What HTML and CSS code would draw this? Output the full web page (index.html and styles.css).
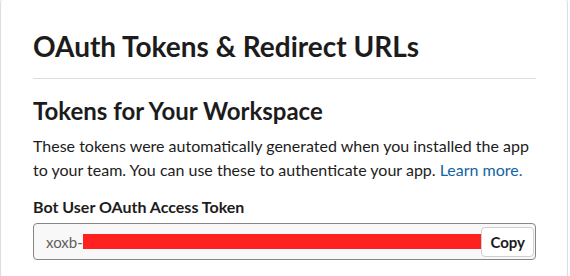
FILE: index.html
```html
<!DOCTYPE html>
<html lang="en">
<head>
    <meta charset="UTF-8">
    <title>OAuth Tokens</title>
    <link rel="stylesheet" href="styles.css">
</head>
<body>
    <div class="card">
        <h1 class="title">OAuth Tokens &amp; Redirect URLs</h1>
        <div class="section">
            <h2 class="subtitle">Tokens for Your Workspace</h2>
            <p class="desc">These tokens were automatically generated when you installed the app to your team. You can use these to authenticate your app. <a href="#">Learn more.</a></p>
            <label class="field-label">Bot User OAuth Access Token</label>
            <div class="token-box">
                <span class="token-text">xoxb-</span>
                <span class="redacted"></span>
                <button class="copy-btn">Copy</button>
            </div>
        </div>
    </div>
</body>
</html>
```

FILE: styles.css
```css
/* Layout utama */
body {
    margin: 0;
    background: white;
    font-family: Lato, "Noto Sans", sans-serif;
    color: #1d1c1d;
}
.card {
    width: 568px;
    margin-top: -3px;
    border: 1px solid #dddddd;
    border-radius: 6px;
    padding: 0 31px 20px 32px;
    box-sizing: border-box;
}
.title {
    margin: 0;
    padding: 33px 0 17px;
    font-size: 28px;
    font-weight: 700;
    line-height: 30px;
    border-bottom: 1px solid #dddddd;
}
.subtitle {
    margin: 0;
    padding-top: 17px;
    font-size: 24px;
    font-weight: 700;
    line-height: 30px;
}
.desc {
    margin: 8px 0 0;
    font-size: 16px;
    line-height: 24px;
}
.desc a {
    color: #1264a3;
    text-decoration: none;
}
/* Token field */
.field-label {
    display: block;
    margin-top: 14px;
    font-size: 16px;
    font-weight: 700;
    line-height: 22px;
}
.token-box {
    display: flex;
    align-items: center;
    margin-top: 5px;
    height: 37px;
    box-sizing: border-box;
    border: 1px solid #868686;
    border-radius: 4px;
    background: #f8f8f8;
    padding: 0 1px 0 12px;
}
.token-text {
    font-size: 15px;
    color: #616061;
}
.redacted {
    flex: 1;
    height: 15px;
    margin-right: -2px;
    background: #ff2020;
}
.copy-btn {
    position: relative;
    height: 30px;
    padding: 0 8px;
    border: 1px solid #cfcfcf;
    border-radius: 4px;
    background: white;
    font-family: Lato, sans-serif;
    font-size: 15px;
    font-weight: 700;
    color: #1d1c1d;
}
```
